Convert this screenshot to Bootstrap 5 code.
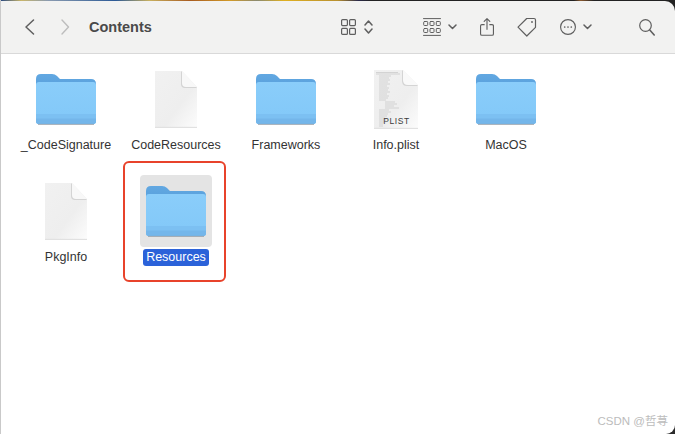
<!DOCTYPE html>
<html lang="en">
<head>
<meta charset="utf-8">
<title>Contents</title>
<link href="https://cdn.jsdelivr.net/npm/bootstrap@5.3.0/dist/css/bootstrap.min.css" rel="stylesheet">
<style>
html,body{height:100%;overflow:hidden}
body{background:#2b2b2b;font-family:"Liberation Sans",Arial,sans-serif;color:#2b2b2b}
.finder-win{position:relative;height:434px;width:675px;background:#fff;border-left:1px solid #c9c9c9;border-bottom-right-radius:9px}
.top-zone{padding-top:1px;background:linear-gradient(90deg,#2a4a80 0,#c9b56a 3%,#8a9bb0 7%,#2c5a96 17%,#c8b060 22%,#a85c20 28%,#d29a28 34%,#8a8a70 38%,#e0b020 42%,#b89030 50%,#2b2b4a 53%,#222 55%,#222 85%,#8a5a30 86%,#222 88%,#222 100%)}
.tool-bar{height:53px;background:#f2f2f1;border-bottom:1px solid #d9d9d9;border-top-right-radius:10px;padding-left:23px}
.nav-arrows{gap:26px;width:65px}
.win-title{font-size:14.500px;font-weight:700;color:#4a4a4a;line-height:1}
.tool-ic{display:block;flex:none;fill:none;stroke:#5f5f5f;stroke-width:1.2;stroke-linecap:round;stroke-linejoin:round}
.tool-set{margin-left:auto;padding-right:20px}
.ml-a{margin-left:8px}
.ml-b{margin-left:50px}
.ml-c{margin-left:7px}
.ml-d{margin-left:23px}
.ml-e{margin-left:47px}
.file-grid{display:grid;grid-template-columns:repeat(5,110px);grid-auto-rows:112px;padding:9px 0 0 10px}
.file-cell{position:relative;display:flex;flex-direction:column;align-items:center}
.ic-box{width:72px;height:72px;display:flex;align-items:center;justify-content:center;border-radius:4px}
.ic-box.is-sel{background:#e4e4e4}
.file-name{font-size:12.500px;line-height:17px;height:17px;margin-top:2px;padding:0 3px;border-radius:3px;white-space:nowrap;color:#333}
.file-name.is-sel{background:#2b62d9;color:#fff}
.red-frame{position:absolute;left:2px;top:-14px;width:103px;height:121px;border:2px solid #e8432b;border-radius:6px;pointer-events:none}
.water-mark{position:absolute;right:7px;bottom:6px;font-size:11.500px;line-height:14px;color:#bcbcbc;font-family:"Liberation Sans","Noto Sans CJK SC",sans-serif}
</style>
</head>
<body>
<svg width="0" height="0" class="position-absolute">
<defs>
<linearGradient id="fb" x1="0" y1="0" x2="0" y2="1"><stop offset="0" stop-color="#8acdfa"/><stop offset="1" stop-color="#82c8f8"/></linearGradient>
<linearGradient id="bk" x1="0" y1="0" x2="0" y2="1"><stop offset="0" stop-color="#62a8e2"/><stop offset="1" stop-color="#418bcb"/></linearGradient>
<linearGradient id="pg" x1="0" y1="0" x2="1" y2="1"><stop offset="0" stop-color="#f1f1f1"/><stop offset=".6" stop-color="#eeeeee"/><stop offset="1" stop-color="#fcfcfc"/></linearGradient>
<symbol id="folder" viewBox="0 0 60 52">
<path d="M0 6q0-5 5-5h11q3 0 5 2l3 3h31q5 0 5 5v36q0 4-4 4H4q-4 0-4-4z" fill="url(#bk)"/>
<path d="M0 12q0-3 3-3h54q3 0 3 3v36q0 3-3 3H3q-3 0-3-3z" fill="url(#fb)"/>
<path d="M0 41h60v7q0 3-3 3H3q-3 0-3-3z" fill="#7cc0f2"/>
<path d="M0 45.500h60v2.500q0 3-3 3H3q-3 0-3-3z" fill="#74b6ea"/>
<path d="M2 51.400h56" stroke="#8a97a3" stroke-width=".8"/>
</symbol>
<symbol id="doc" viewBox="0 0 44 58">
<path d="M1 1h27l15 16v40H1z" fill="url(#pg)"/>
<path d="M1 57.400h42" stroke="#d4d4d4" stroke-width=".8"/>
<path d="M27 1v13q0 4 4 4h12z" fill="#d4d4d4"/>
<path d="M28 1v12q0 4 4 4h11z" fill="#f8f8f8"/>
</symbol>
</defs>
</svg>
<div class="finder-win">
<div class="top-zone">
<div class="tool-bar d-flex align-items-center">
<div class="nav-arrows d-flex align-items-center">
<svg class="tool-ic" width="11" height="16" viewBox="0 0 11 16"><path d="M9.500 1 2 8l7.500 7" stroke-width="1.500"/></svg>
<svg class="tool-ic" width="9" height="16" viewBox="0 0 9 16"><path d="M1 1l6.500 7L1 15" stroke="#bdbdbd" stroke-width="1.400"/></svg>
</div>
<span class="win-title">Contents</span>
<div class="d-flex align-items-center tool-set">
<svg class="tool-ic" width="15" height="16" viewBox="0 0 15 16"><rect x=".6" y=".6" width="5.800" height="6" rx="1"/><rect x="8.600" y=".6" width="5.800" height="6" rx="1"/><rect x=".6" y="9.400" width="5.800" height="6" rx="1"/><rect x="8.600" y="9.400" width="5.800" height="6" rx="1"/></svg>
<svg class="tool-ic ml-a" width="9" height="16" viewBox="0 0 9 16"><path d="M1 6l3.500-4L8 6M1 10l3.500 4L8 10" stroke-width="1.500"/></svg>
<svg class="tool-ic ml-b" width="18" height="18" viewBox="0 0 18 18"><path d="M.5.600h17M.5 17.400h17" stroke-width="1"/><rect x=".7" y="3.500" width="4" height="4" rx=".8" stroke-width="1"/><rect x="7" y="3.500" width="4" height="4" rx=".8" stroke-width="1"/><rect x="13.300" y="3.500" width="4" height="4" rx=".8" stroke-width="1"/><rect x=".7" y="10.500" width="4" height="4" rx=".8" stroke-width="1"/><rect x="7" y="10.500" width="4" height="4" rx=".8" stroke-width="1"/><rect x="13.300" y="10.500" width="4" height="4" rx=".8" stroke-width="1"/></svg>
<svg class="tool-ic ml-c" width="9" height="6" viewBox="0 0 9 6"><path d="M1 1l3.500 3.500L8 1" stroke-width="1.500"/></svg>
<svg class="tool-ic ml-d" width="14" height="18" viewBox="0 0 15 19"><path d="M4.500 7H2q-1.400 0-1.400 1.400v8.500q0 1.400 1.400 1.400h11q1.400 0 1.400-1.400V8.400Q14.400 7 13 7h-2.500M7.500 12V1M4.500 3.500l3-3 3 3"/></svg>
<svg class="tool-ic ml-d" width="20" height="20" viewBox="0 0 20 20"><path d="M9.700 1.500h7.300q1.500 0 1.500 1.500v7.300L9.800 19 1 10.200z"/><circle cx="15" cy="5" r=".9" fill="#5f5f5f" stroke="none"/></svg>
<svg class="tool-ic ml-d" width="16" height="16" viewBox="0 0 17 17"><circle cx="8.500" cy="8.500" r="7.900"/><circle cx="5" cy="8.500" r=".9" fill="#5f5f5f" stroke="none"/><circle cx="8.500" cy="8.500" r=".9" fill="#5f5f5f" stroke="none"/><circle cx="12" cy="8.500" r=".9" fill="#5f5f5f" stroke="none"/></svg>
<svg class="tool-ic ml-c" width="9" height="6" viewBox="0 0 9 6"><path d="M1 1l3.500 3.500L8 1" stroke-width="1.500"/></svg>
<svg class="tool-ic ml-e" width="16" height="17" viewBox="0 0 16 17"><circle cx="6.500" cy="6.500" r="5.800"/><path d="M10.800 11l4.400 5" stroke-width="1.600"/></svg>
</div>
</div>
</div>
<div class="file-grid">
<div class="file-cell"><div class="ic-box"><svg width="60" height="52"><use href="#folder"/></svg></div><div class="file-name">_CodeSignature</div></div>
<div class="file-cell"><div class="ic-box"><svg width="44" height="58"><use href="#doc"/></svg></div><div class="file-name">CodeResources</div></div>
<div class="file-cell"><div class="ic-box"><svg width="60" height="52"><use href="#folder"/></svg></div><div class="file-name">Frameworks</div></div>
<div class="file-cell"><div class="ic-box"><svg width="46" height="60" viewBox="0 0 46 60">
<path d="M1 1h29l15 15v43H1z" fill="url(#pg)"/>
<path d="M1 59.400h44" stroke="#d4d4d4" stroke-width=".8"/>
<path d="M29 1v11q0 5 5 5h11z" fill="#d4d4d4"/>
<path d="M30 1v10q0 5 5 5h10z" fill="#f9f9f9"/>
<path d="M3 3.500h22M3 5h24M6 7h12M6 9h10M6 11h11M6 13h9M6 15h11M6 17h8M6 19h10M6 21h9M6 23h11M6 25h8M6 27h10M6 29h9M6 31h7M12 33h10M12 35h12M12 37h9M12 39h14M6 41h10M6 43h12M6 45h9M6 47h8M6 49h6M6 51h7M6 53h5M6 55h4M6 57h4" stroke="#c6c6c6" stroke-width=".7"/>
<text x="23.500" y="54.500" text-anchor="middle" font-size="8.500" fill="#3a3a3a" letter-spacing=".6" font-family="Liberation Sans,sans-serif">PLIST</text>
</svg></div><div class="file-name">Info.plist</div></div>
<div class="file-cell"><div class="ic-box"><svg width="60" height="52"><use href="#folder"/></svg></div><div class="file-name">MacOS</div></div>
<div class="file-cell"><div class="ic-box"><svg width="44" height="58"><use href="#doc"/></svg></div><div class="file-name">PkgInfo</div></div>
<div class="file-cell"><div class="ic-box is-sel"><svg width="60" height="52"><use href="#folder"/></svg></div><div class="file-name is-sel">Resources</div><div class="red-frame"></div></div>
</div>
<div class="water-mark">CSDN @哲荨</div>
</div>
</body>
</html>
